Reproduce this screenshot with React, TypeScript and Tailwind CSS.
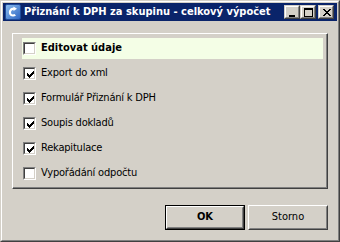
import React from 'react';

const font = { fontFamily: '"DejaVu Sans Condensed", "Liberation Sans", Arial, sans-serif' };

const Check = () => (
    <svg width="7" height="7" viewBox="0 0 7 7" shapeRendering="crispEdges" className="absolute left-[3px] top-[3px]">
        <path
            fill="#000"
            d="M6 0h1v1h-1zM5 1h2v1h-2zM0 2h1v1h-1zM4 2h3v1h-3zM0 3h2v1h-2zM3 3h3v1h-3zM0 4h5v1h-5zM1 5h3v1h-3zM2 6h1v1h-1z"
        />
    </svg>
);

const Checkbox = ({ checked }: { checked: boolean }) => (
    <div className="relative w-[13px] h-[13px] shrink-0 border border-t-[#808080] border-l-[#808080] border-r-white border-b-white">
        <div className="w-full h-full bg-white border border-t-[#404040] border-l-[#404040] border-r-[#d4d0c8] border-b-[#d4d0c8]" />
        {checked && <Check />}
    </div>
);

const CaptionButton = ({ children }: { children: React.ReactNode }) => (
    <div className="w-[16px] h-[14px] bg-[#d4d0c8] border border-t-[#d4d0c8] border-l-[#d4d0c8] border-r-[#404040] border-b-[#404040]">
        <div className="relative w-full h-full border border-t-white border-l-white border-r-[#808080] border-b-[#808080]">
            {children}
        </div>
    </div>
);

const Button = ({ label, isDefault }: { label: string; isDefault?: boolean }) => (
    <div className={`w-[80px] h-[25px] ${isDefault ? 'border border-black' : ''}`}>
        <div className="h-full border border-t-white border-l-white border-r-[#404040] border-b-[#404040]">
            <div
                className={`h-full flex items-center justify-center text-[11px] text-black border border-t-[#d4d0c8] border-l-[#d4d0c8] border-r-[#808080] border-b-[#808080] ${isDefault ? 'font-bold' : ''}`}
            >
                {label}
            </div>
        </div>
    </div>
);

const items = [
    { label: 'Export do xml', checked: true },
    { label: 'Formulář Přiznání k DPH', checked: true },
    { label: 'Soupis dokladů', checked: true },
    { label: 'Rekapitulace', checked: true },
    { label: 'Vypořádání odpočtu', checked: false },
];

export default function App() {
    return (
        <div
            style={font}
            className="w-[340px] h-[242px] bg-[#d4d0c8] border border-t-[#d4d0c8] border-l-[#d4d0c8] border-r-[#404040] border-b-[#404040]"
        >
            <div className="h-full flex flex-col p-px border border-t-white border-l-white border-r-[#808080] border-b-[#808080]">
                {/* Title bar */}
                <div className="h-[18px] flex items-center bg-[#0a246a] pl-[2px] pr-[3px]">
                    <svg width="16" height="16" viewBox="0 0 16 16" className="shrink-0">
                        <defs>
                            <linearGradient id="ic" x1="0" y1="0" x2="1" y2="1">
                                <stop offset="0" stopColor="#8fc0f0" />
                                <stop offset="1" stopColor="#2a62c0" />
                            </linearGradient>
                        </defs>
                        <rect x="0.5" y="0.5" width="15" height="15" rx="1.5" fill="url(#ic)" stroke="#1d4a9a" />
                        <path d="M9 3.5 C5 3.5 3.5 6.5 4 9.5 C4.6 12.5 8.5 13.5 11 11.5 L9.5 10 C8 11 6 10.5 6 8.5 C6 6.5 8 5.5 9.5 6 Z" fill="#fff" />
                        <path d="M8.5 2.5 L12 4.8 L8.5 7 Z" fill="#fff" />
                    </svg>
                    <span className="ml-[3px] text-[11px] font-bold text-white whitespace-nowrap">
                        Přiznání k DPH za skupinu - celkový výpočet
                    </span>
                    <div className="ml-auto flex">
                        <CaptionButton>
                            <div className="absolute left-[3px] top-[8px] w-[6px] h-[2px] bg-black" />
                        </CaptionButton>
                        <CaptionButton>
                            <div className="absolute left-[2px] top-[1px] w-[9px] h-[9px] border border-t-2 border-black" />
                        </CaptionButton>
                        <div className="w-[2px]" />
                        <CaptionButton>
                            <svg width="8" height="7" viewBox="0 0 8 7" shapeRendering="crispEdges" className="absolute left-[3px] top-[2px]">
                                <path
                                    fill="#000"
                                    d="M0 0h2v1h-2zM6 0h2v1h-2zM1 1h2v1h-2zM5 1h2v1h-2zM2 2h4v1h-4zM3 3h2v1h-2zM2 4h4v1h-4zM1 5h2v1h-2zM5 5h2v1h-2zM0 6h2v1h-2zM6 6h2v1h-2z"
                                />
                            </svg>
                        </CaptionButton>
                    </div>
                </div>

                {/* Body */}
                <div className="flex-1 flex flex-col pt-[12px] px-[9px]">
                    <div className="h-[156px] border border-t-white border-l-white border-r-[#404040] border-b-[#404040]">
                        <div className="h-full pl-[9px] pr-[3px] pt-[4px] border-r border-b border-r-[#808080] border-b-[#808080]">
                            <div className="h-[21px] flex items-center bg-[#f4fee6] pl-px">
                                <Checkbox checked={false} />
                                <span className="ml-[5px] text-[11px] font-bold text-black">Editovat údaje</span>
                            </div>
                            <div className="mt-[2px]">
                                {items.map((it) => (
                                    <div key={it.label} className="h-[25px] flex items-center pl-px">
                                        <Checkbox checked={it.checked} />
                                        <span className="ml-[5px] text-[11px] tracking-[-0.2px] text-black">{it.label}</span>
                                    </div>
                                ))}
                            </div>
                        </div>
                    </div>

                    <div className="mt-[16px] flex justify-end gap-[3px]">
                        <Button label="OK" isDefault />
                        <Button label="Storno" />
                    </div>
                </div>
            </div>
        </div>
    );
}
